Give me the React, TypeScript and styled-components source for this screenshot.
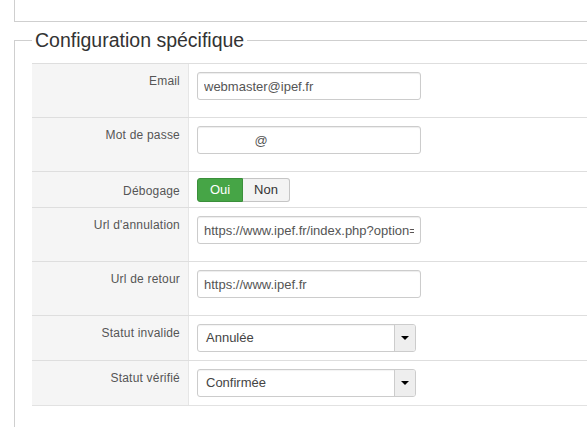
import React from "react";
import styled, { createGlobalStyle } from "styled-components";

const GlobalStyle = createGlobalStyle`
  html, body {
    margin: 0;
    overflow: hidden;
    background: #fff;
    font-family: "Liberation Sans", Arial, sans-serif;
  }
`;

const Page = styled.div`
  width: 820px;
  padding-left: 14px;
`;

const TopPanel = styled.div`
  height: 21px;
  border-left: 1px solid #cfcfcf;
  border-bottom: 1px solid #cfcfcf;
`;

const Fieldset = styled.fieldset`
  margin: 7px 0 0;
  padding: 12px 17px 60px 17px;
  border: 1px solid #cfcfcf;
  border-right: none;
  min-width: 0;
`;

const Legend = styled.legend`
  padding: 0 3px;
  font-size: 19.5px;
  line-height: 22px;
  color: #333;
`;

const Table = styled.div`
  border-bottom: 1px solid #e2e2e2;
`;

const Row = styled.div`
  display: grid;
  grid-template-columns: 157px 1fr;
  border-top: 1px solid #dedede;
`;

const Label = styled.div<{ $top?: number }>`
  background: #f5f5f5;
  border-right: 1px solid #e6e6e6;
  text-align: right;
  padding: ${(p) => p.$top ?? 8}px 8px 0 0;
  font-size: 12px;
  letter-spacing: 0.2px;
  line-height: 18px;
  color: #555;
`;

const Value = styled.div<{ $top?: number; $bottom?: number }>`
  padding: ${(p) => p.$top ?? 8}px 8px ${(p) => p.$bottom ?? 8}px 8px;
`;

const TextInput = styled.input`
  display: block;
  box-sizing: border-box;
  width: 224px;
  height: 28px;
  margin: 0 0 9px;
  padding: 4px 6px;
  border: 1px solid #ccc;
  border-radius: 3px;
  box-shadow: inset 0 1px 1px rgba(0, 0, 0, 0.075);
  font-family: "Liberation Sans", Arial, sans-serif;
  font-size: 13px;
  color: #555;
  background: #fff;
  outline: none;
`;

const BtnGroup = styled.div`
  display: flex;
`;

const Toggle = styled.span<{ $active?: boolean; $w: number }>`
  box-sizing: border-box;
  width: ${(p) => p.$w}px;
  height: 24px;
  line-height: 22px;
  text-align: center;
  font-size: 13px;
  border: 1px solid ${(p) => (p.$active ? "#3b8f3b" : "#c5c5c5")};
  background: ${(p) => (p.$active ? "#46a546" : "#f3f3f3")};
  color: ${(p) => (p.$active ? "#fff" : "#333")};
  &:first-child {
    border-radius: 3px 0 0 3px;
  }
  &:last-child {
    border-radius: 0 3px 3px 0;
    border-left: none;
  }
`;

const Select = styled.div`
  box-sizing: border-box;
  display: flex;
  width: 219px;
  height: 28px;
  border: 1px solid #ccc;
  border-radius: 3px;
  box-shadow: inset 0 1px 1px rgba(0, 0, 0, 0.05);
  overflow: hidden;
`;

const SelectText = styled.span`
  flex: 1;
  padding-left: 8px;
  line-height: 26px;
  font-size: 13px;
  color: #444;
`;

const SelectArrow = styled.span`
  width: 20px;
  background: #eee;
  border-left: 1px solid #ccc;
  display: flex;
  align-items: center;
  justify-content: center;
  &::after {
    content: "";
    border-left: 4px solid transparent;
    border-right: 4px solid transparent;
    border-top: 4px solid #000;
  }
`;

type Field =
  | { label: string; kind: "text"; value: string }
  | { label: string; kind: "toggle" }
  | { label: string; kind: "select"; value: string };

const fields: Field[] = [
  { label: "Email", kind: "text", value: "webmaster@ipef.fr" },
  { label: "Mot de passe", kind: "text", value: "\u00a0".repeat(14) + "@" },
  { label: "Débogage", kind: "toggle" },
  { label: "Url d'annulation", kind: "text", value: "https://www.ipef.fr/index.php?option=com_ipef" },
  { label: "Url de retour", kind: "text", value: "https://www.ipef.fr" },
  { label: "Statut invalide", kind: "select", value: "Annulée" },
  { label: "Statut vérifié", kind: "select", value: "Confirmée" },
];

function FieldControl({ field }: { field: Field }) {
  if (field.kind === "text") {
    return (
      <Value>
        <TextInput type="text" value={field.value} readOnly />
      </Value>
    );
  }
  if (field.kind === "toggle") {
    return (
      <Value $top={6} $bottom={5}>
        <BtnGroup>
          <Toggle $active $w={46}>Oui</Toggle>
          <Toggle $w={47}>Non</Toggle>
        </BtnGroup>
      </Value>
    );
  }
  return (
    <Value>
      <Select>
        <SelectText>{field.value}</SelectText>
        <SelectArrow />
      </Select>
    </Value>
  );
}

export default function App() {
  return (
    <>
      <GlobalStyle />
      <Page>
        <TopPanel />
        <Fieldset>
          <Legend>Configuration spécifique</Legend>
          <Table>
            {fields.map((f) => (
              <Row key={f.label}>
                <Label $top={f.kind === "toggle" ? 10 : 8}>{f.label}</Label>
                <FieldControl field={f} />
              </Row>
            ))}
          </Table>
        </Fieldset>
      </Page>
    </>
  );
}
